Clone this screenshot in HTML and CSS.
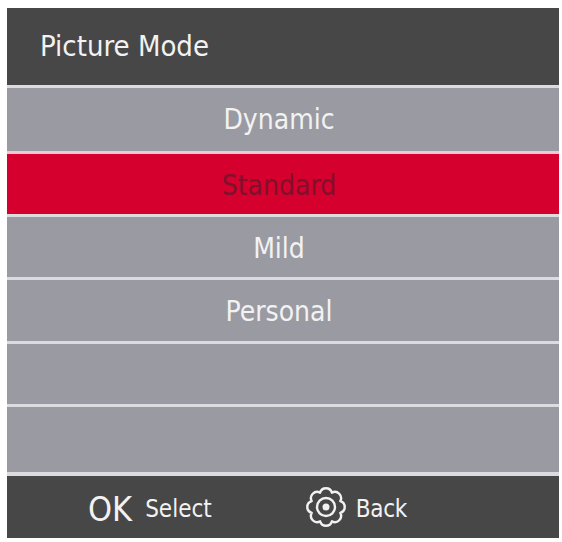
FILE: index.html
```html
<!DOCTYPE html>
<html lang="en">
<head>
    <meta charset="UTF-8">
    <title>Picture Mode</title>
    <link rel="stylesheet" href="styles.css">
</head>
<body>
    <div class="osd">
        <header class="osd-title">Picture Mode</header>
        <ul class="mode-list">
            <li class="mode first">Dynamic</li>
            <li class="mode active">Standard</li>
            <li class="mode">Mild</li>
            <li class="mode wide">Personal</li>
            <li class="mode"></li>
            <li class="mode last"></li>
        </ul>
        <footer class="osd-footer">
            <div class="hint hint-ok">
                <span class="ok">OK</span>
                <span class="hint-label">Select</span>
            </div>
            <div class="hint hint-back">
                <svg class="gear" width="40" height="40" viewBox="0 0 40 40" fill="none" stroke="#f2f2f2">
                    <path stroke-width="2.4" stroke-linejoin="round" d="M34.32 14.07A6.2 6.2 0 0 1 34.32 25.93A6.2 6.2 0 0 1 25.93 34.32A6.2 6.2 0 0 1 14.07 34.32A6.2 6.2 0 0 1 5.68 25.93A6.2 6.2 0 0 1 5.68 14.07A6.2 6.2 0 0 1 14.07 5.68A6.2 6.2 0 0 1 25.93 5.68A6.2 6.2 0 0 1 34.32 14.07Z"/>
                    <circle cx="20" cy="20" r="9" stroke-width="2.4"/>
                    <circle cx="20" cy="20" r="3.5" fill="#f2f2f2" stroke="none"/>
                </svg>
                <span class="hint-label">Back</span>
            </div>
        </footer>
    </div>
</body>
</html>
```

FILE: styles.css
```css
body {
    margin: 0;
    padding: 8px 3px 4px 7px;
    background-color: #fff;
    font-family: "DejaVu Sans Condensed", "DejaVu Sans", sans-serif;
    font-stretch: condensed;
}

.osd {
    width: 552px;
    color: #f2f2f2;
}

.osd-title {
    height: 77px;
    padding-left: 33px;
    background-color: #474747;
    font-size: 29px;
    line-height: 76px;
}

.mode-list {
    list-style: none;
    margin: 0;
    padding: 0;
}

.mode {
    height: 58px;
    padding: 2px 8px 0 0;
    border-top: 3px solid #dcdce0;
    background-color: #9a9aa2;
    font-size: 28px;
    line-height: 60px;
    text-align: center;
}

.mode.first {
    height: 61px;
}

.mode.wide {
    height: 59px;
}

.mode.active {
    background-color: #d5002d;
    color: #80102c;
    border-top-color: #f2c8d0;
}

.mode.last {
    height: 63px;
}

.osd-footer {
    display: flex;
    align-items: center;
    height: 66px;
    border-top: 4px solid #dcdce0;
    background-color: #474747;
    font-size: 24px;
    box-sizing: border-box;
}

.hint {
    display: flex;
    align-items: center;
}

.hint-ok {
    gap: 13px;
    margin-left: 81px;
}

.hint-back {
    gap: 10px;
    margin-left: 94px;
    letter-spacing: -0.3px;
}

.hint-label {
    padding-top: 3px;
}

.ok {
    padding-top: 4px;
    font-size: 34px;
}
```
